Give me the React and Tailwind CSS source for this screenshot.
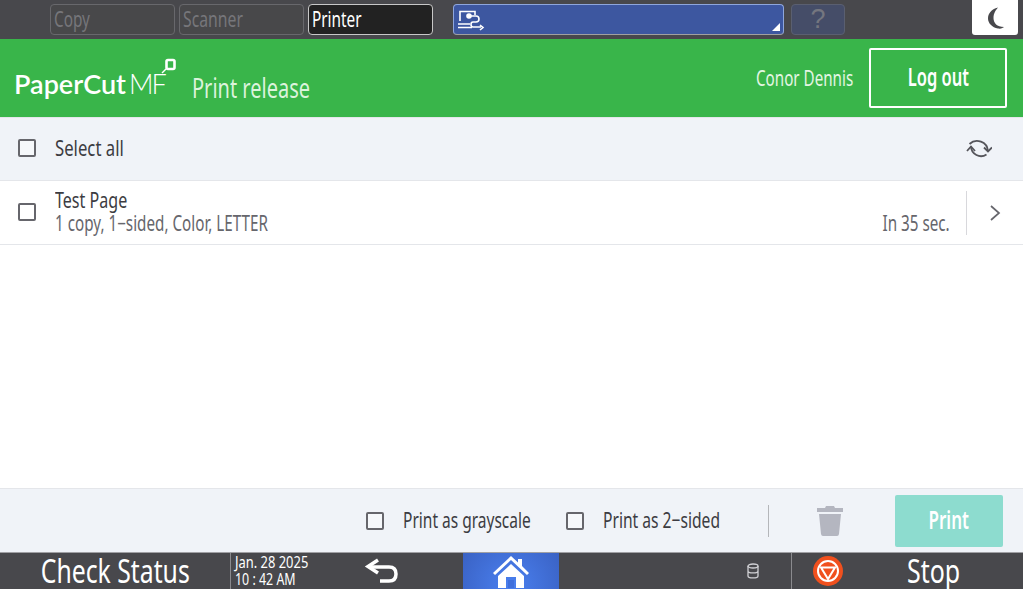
import { useState } from "react";

const Narrow = ({ children, className = "", fit = "scale-x-[0.72]" }) => (
  <span className={`inline-block whitespace-nowrap origin-left ${fit} ${className}`}>{children}</span>
);

const Box = () => <span className="block w-[18px] h-[18px] rounded-[2px] border-2 border-[#66666c] bg-white/40" />;

const TabButton = ({ label, active, fit }) => (
  <div className={`w-[125px] h-[31px] rounded-[4px] border pl-[3px] flex items-center text-[21px] ${active ? "bg-[#222222] border-[#c8c8c8] text-white" : "bg-[#48484a] border-[#68686c] text-[#76767a]"}`}>
    <Narrow fit={fit}>{label}</Narrow>
  </div>
);

const App = () => {
  const [selected, setSelected] = useState(false);

  return (
    <div className="w-[1023px] h-[589px] flex flex-col overflow-hidden bg-white font-['Noto_Sans',sans-serif]">
      {/* device top bar */}
      <div className="h-[39px] shrink-0 bg-[#48484c] flex items-start pl-[50px]">
        <div className="flex gap-1 mt-1">
          <TabButton label="Copy" fit="scale-x-[0.73]" />
          <TabButton label="Scanner" fit="scale-x-[0.75]" />
          <TabButton label="Printer" active fit="scale-x-[0.73]" />
        </div>
        <div className="relative ml-5 mt-1 w-[331px] h-[31px] rounded-[4px] border border-[#8ea6dc] border-b-[#a0a0a0] bg-[#3d57a0] pl-[3px] flex items-center">
          <svg width="28" height="24" viewBox="0 0 28 24" fill="none" stroke="white" strokeWidth="1.6">
            <path d="M3 13V3.500h15V7" />
            <path d="M1 16h12M1 19.500h14" />
            <circle cx="12" cy="8" r="2" fill="white" />
            <path d="M14 8h5q3 0 3 3t-3 3h-3q-2 0-2 2.500t2 2.500h8M23 17l3 2.500l-3 2.500" />
          </svg>
          <span className="absolute right-[3px] bottom-[3px] w-0 h-0 border-l-[8px] border-l-transparent border-b-[8px] border-b-white" />
        </div>
        <div className="ml-[7px] mt-1 w-[54px] h-[31px] rounded-[4px] border border-[#5a5f70] bg-[#454d68] flex items-center justify-center text-[#74767f] text-[27px] leading-none font-['Liberation_Sans',sans-serif]">?</div>
        <div className="ml-[127px] w-[46px] h-[35px] bg-white rounded-b-[3px] flex items-center justify-center">
          <svg width="20" height="24" viewBox="0 0 20 24">
            <path d="M13 1.500C6 3 3 8 3 12.500S7 21.500 13 22.500c3 .5 5-.5 6-1.500C12 21 8.500 17 8.500 12S11 4 13 1.500z" fill="#48484c" />
          </svg>
        </div>
      </div>

      {/* green header */}
      <div className="h-[78px] shrink-0 bg-[#39b54a] flex items-center pl-[15px] pr-4 text-white">
        <div className="relative w-[177px] h-full">
          <div className="absolute left-[-1px] top-[30px] flex items-baseline font-['Lato',sans-serif] text-[27px] leading-[30px]">
            <span className="font-semibold">PaperCut</span>
            <span className="font-light ml-[3px] tracking-[-2px]">MF</span>
          </div>
          <svg className="absolute left-[146px] top-[19px]" width="15" height="16" viewBox="0 0 15 16" fill="none" stroke="white">
            <rect x="5.500" y="2" width="8" height="9" rx="1.500" strokeWidth="2.600" />
            <path d="M5 11L1 15" strokeWidth="1.500" />
          </svg>
        </div>
        <Narrow className="text-[28px] text-[#dcf3dc] mt-[18px]" fit="scale-x-[0.715]">Print release</Narrow>
        <div className="ml-auto flex items-center">
          <Narrow className="text-[22px] text-[#e3f6e3] w-[97px] mr-4 mb-[2px]" fit="scale-x-[0.69]">Conor Dennis</Narrow>
          <div className="w-[138px] h-[60px] rounded-[2px] border-2 border-white flex items-center justify-center font-semibold text-[25px] pb-[2px]">
            <span className="inline-block whitespace-nowrap scale-x-[0.66]">Log out</span>
          </div>
        </div>
      </div>

      {/* select all row */}
      <div className="h-[64px] shrink-0 bg-[#f0f3f8] border-y border-[#e4e6ea] flex items-center pl-[18px] pr-[31px] text-[#3c3c42]">
        <button type="button" className="mb-[2px]" onClick={() => setSelected(!selected)}><Box /></button>
        <Narrow className="ml-[19px] text-[22px] mb-[3px]" fit="scale-x-[0.76]">Select all</Narrow>
        <svg className="ml-auto" width="28" height="24" viewBox="0 0 28 24" fill="none" stroke="#55555b" strokeWidth="1.800">
          <path d="M5.500 7A11 11 0 0 1 24 14" />
          <path d="M7 9.500A10 10 0 0 0 22.500 17.500" />
          <path d="M20 10.500l4 4l4-4M3 14l4-4.500l4 4.500" />
        </svg>
      </div>

      {/* job row */}
      <div className="h-[64px] shrink-0 border-b border-[#e4e6ea] flex items-center pl-[18px] text-[#3c3c42]">
        <span className="mb-[2px]"><Box /></span>
        <div className="ml-[19px] flex flex-col mb-[4px]">
          <Narrow className="text-[22px] leading-[24px]" fit="scale-x-[0.73]">Test Page</Narrow>
          <Narrow className="text-[21px] leading-[24px] text-[#66666c]" fit="scale-x-[0.725]">1 copy, 1−sided, Color, LETTER</Narrow>
        </div>
        <span className="ml-auto self-end mb-[8px] mr-4 inline-block whitespace-nowrap origin-right scale-x-[0.725] text-[21px] leading-[26px] text-[#66666c]">In 35 sec.</span>
        <div className="h-[44px] w-[57px] border-l border-[#d8d8dc] flex items-center justify-center">
          <svg width="12" height="18" viewBox="0 0 12 18" fill="none" stroke="#66666c" strokeWidth="1.700">
            <path d="M2 2l8 7l-8 7" />
          </svg>
        </div>
      </div>

      <div className="flex-1" />

      {/* actions */}
      <div className="h-[64px] shrink-0 bg-[#f0f3f8] border-t border-[#e4e6ea] flex items-center pl-[366px] text-[#3c3c42]">
        <Box />
        <Narrow className="ml-[19px] w-[144px] text-[22px] mb-[2px]" fit="scale-x-[0.705]">Print as grayscale</Narrow>
        <span className="ml-[19px]"><Box /></span>
        <Narrow className="ml-[19px] w-[135px] text-[22px] mb-[2px]" fit="scale-x-[0.71]">Print as 2−sided</Narrow>
        <div className="ml-[30px] w-px h-[32px] bg-[#b4b6ba]" />
        <svg className="ml-[48px]" width="26" height="32" viewBox="0 0 26 32" fill="#b4b6c0">
          <path d="M9 1h8l1 2h8v4H0V3h8zM2 9h22l-2 20q-.3 2-2 2H6q-1.700 0-2-2z" />
        </svg>
        <div className="ml-[52px] w-[108px] h-[52px] rounded-[2px] bg-[#8ddccf] flex items-center justify-center text-white font-semibold text-[25px] pb-[2px]">
          <span className="inline-block scale-x-[0.68]">Print</span>
        </div>
      </div>

      {/* device bottom bar */}
      <div className="h-[37px] shrink-0 bg-[#48484c] border-t border-[#a0a0a4] flex items-stretch text-white overflow-hidden">
        <div className="w-[231px] flex items-center justify-center text-[33px] leading-[36px] border-r border-[#8a8a8e]">
          <span className="inline-block whitespace-nowrap scale-x-[0.75]">Check Status</span>
        </div>
        <div className="w-[120px] pl-[4px] flex flex-col text-[17px] leading-[17px]">
          <Narrow fit="scale-x-[0.76]">Jan. 28 2025</Narrow>
          <Narrow fit="scale-x-[0.73]">10 : 42 AM</Narrow>
        </div>
        <div className="w-[112px] flex items-center pl-[12px]">
          <svg width="38" height="28" viewBox="0 0 38 28" fill="none" stroke="white" strokeWidth="3.500">
            <path d="M15 3L5 9.500l10 6.500" />
            <path d="M6 10h20q7 0 7 7t-7 7H17" />
          </svg>
        </div>
        <div className="w-[96px] bg-[radial-gradient(circle_at_50%_90%,#4a80f0,#3a62c4)] flex items-center justify-center">
          <svg width="38" height="33" viewBox="0 0 38 33" fill="white">
            <path d="M19 1L1 18l2 2L19 5l16 15l2-2l-7-7V4h-4v3.500z" />
            <path d="M6 21L19 9l13 12v12h-8V22H14v11H6z" />
            <path d="M16 25h6v8h-6z" fill="#3f6fdc" />
          </svg>
        </div>
        <div className="w-[233px] flex items-center justify-end pr-[32px] border-r border-[#8a8a8e]">
          <svg width="12" height="16" viewBox="0 0 12 16" fill="none" stroke="#d0d0d4" strokeWidth="1.300">
            <ellipse cx="6" cy="3" rx="5" ry="2" />
            <path d="M1 3v10c0 2.600 10 2.600 10 0V3M1 8c0 2.600 10 2.600 10 0" />
          </svg>
        </div>
        <div className="flex-1 flex items-center pl-[21px]">
          <svg width="30" height="30" viewBox="0 0 30 30" className="shrink-0">
            <circle cx="15" cy="15" r="15" fill="#f0501e" />
            <circle cx="15" cy="15" r="10" fill="none" stroke="white" strokeWidth="2" />
            <path d="M8 11.500h14L15 23z" fill="none" stroke="white" strokeWidth="2" />
          </svg>
          <span className="ml-[64px] inline-block origin-left text-[32px] leading-[36px] scale-x-[0.78]">Stop</span>
        </div>
      </div>
    </div>
  );
};

export default App;
